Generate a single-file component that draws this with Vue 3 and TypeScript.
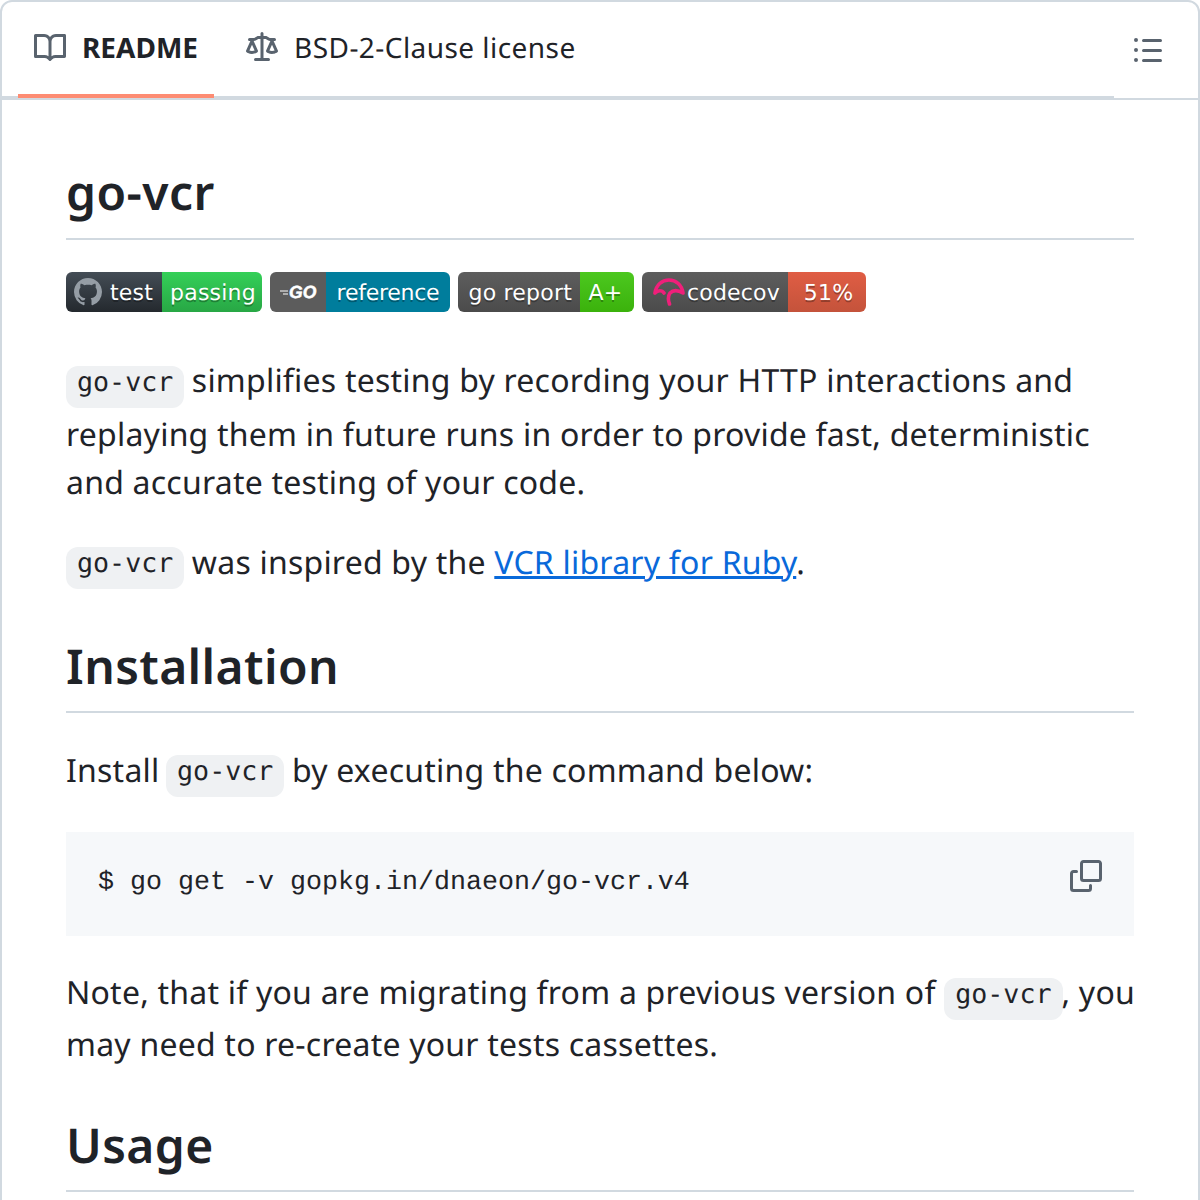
<script setup lang="ts">
type Badge = { left: string; right: string; rightClass: string; leftClass?: string; leftWidth: number; rightWidth: number; icon?: string }

const badges: Badge[] = [
  { left: 'test', right: 'passing', rightClass: 'badge__right--green', leftClass: 'badge__left--dark', leftWidth: 96, rightWidth: 100, icon: 'github' },
  { left: '', right: 'reference', rightClass: 'badge__right--teal', leftClass: 'badge__left--flat', leftWidth: 56, rightWidth: 124, icon: 'go' },
  { left: 'go report', right: 'A+', rightClass: 'badge__right--lime', leftWidth: 122, rightWidth: 54 },
  { left: 'codecov', right: '51%', rightClass: 'badge__right--red', leftWidth: 146, rightWidth: 78, icon: 'codecov' }
]
</script>

<template>
  <div class="readme">
    <header class="readme__header">
      <nav class="tabs">
        <a class="tab tab--active">
          <svg class="tab__icon" viewBox="0 0 16 16" width="32" height="32">
            <path d="M0 1.75A.75.75 0 0 1 .75 1h4.253c1.227 0 2.317.59 3 1.501A3.743 3.743 0 0 1 11.006 1h4.245a.75.75 0 0 1 .75.75v10.5a.75.75 0 0 1-.75.75h-4.507a2.25 2.25 0 0 0-1.591.659l-.622.621a.75.75 0 0 1-1.06 0l-.622-.621A2.25 2.25 0 0 0 5.258 13H.75a.75.75 0 0 1-.75-.75Zm7.251 10.324.004-5.073-.002-2.253A2.25 2.25 0 0 0 5.003 2.5H1.5v9h3.757a3.75 3.75 0 0 1 1.994.574ZM8.755 4.75l-.004 7.322a3.752 3.752 0 0 1 1.992-.572H14.5v-9h-3.495a2.25 2.25 0 0 0-2.25 2.25Z" />
          </svg>
          README
        </a>
        <a class="tab tab--plain">
          <svg class="tab__icon" viewBox="0 0 16 16" width="32" height="32">
            <path d="M8.75.75V2h.985c.304 0 .603.08.867.231l1.29.736c.038.022.08.033.124.033h2.234a.75.75 0 0 1 0 1.5h-.427l2.111 4.692a.75.75 0 0 1-.154.838l-.53-.53.529.531-.001.002-.002.002-.006.006-.006.005-.01.01-.045.04c-.21.176-.441.327-.686.45C14.556 10.78 13.88 11 13 11a4.498 4.498 0 0 1-2.023-.454 3.544 3.544 0 0 1-.686-.45l-.045-.04-.016-.015-.006-.006-.004-.004v-.001a.75.75 0 0 1-.154-.838L12.178 4.5h-.162c-.305 0-.604-.079-.868-.231l-1.29-.736a.245.245 0 0 0-.124-.033H8.75V13h2.5a.75.75 0 0 1 0 1.5h-6.5a.75.75 0 0 1 0-1.5h2.5V3.5h-.984a.245.245 0 0 0-.124.033l-1.289.737c-.265.15-.564.23-.869.23h-.162l2.112 4.692a.75.75 0 0 1-.154.838l-.53-.53.529.531-.001.002-.002.002-.006.006-.016.015-.045.04c-.21.176-.441.327-.686.45C4.556 10.78 3.88 11 3 11a4.498 4.498 0 0 1-2.023-.454 3.544 3.544 0 0 1-.686-.45l-.045-.04-.016-.015-.006-.006-.004-.004v-.001a.75.75 0 0 1-.154-.838L2.178 4.5H1.75a.75.75 0 0 1 0-1.5h2.234a.249.249 0 0 0 .125-.033l1.288-.737c.265-.15.564-.23.869-.23h.984V.75a.75.75 0 0 1 1.5 0Zm2.945 8.477c.285.135.718.273 1.305.273s1.02-.138 1.305-.273L13 6.327Zm-10 0c.285.135.718.273 1.305.273s1.02-.138 1.305-.273L3 6.327Z" />
          </svg>
          BSD-2-Clause license
        </a>
      </nav>
      <button class="outline-btn">
        <svg viewBox="0 0 16 16" width="32" height="32">
          <path d="M5.75 2.5h8.5a.75.75 0 0 1 0 1.5h-8.5a.75.75 0 0 1 0-1.5Zm0 5h8.5a.75.75 0 0 1 0 1.5h-8.5a.75.75 0 0 1 0-1.5Zm0 5h8.5a.75.75 0 0 1 0 1.5h-8.5a.75.75 0 0 1 0-1.5ZM2 14a1 1 0 1 1 0-2 1 1 0 0 1 0 2Zm1-6a1 1 0 1 1-2 0 1 1 0 0 1 2 0ZM2 4a1 1 0 1 1 0-2 1 1 0 0 1 0 2Z" />
        </svg>
      </button>
    </header>

    <article class="markdown">
      <h1>go-vcr</h1>
      <div class="badges">
        <span v-for="badge in badges" :key="badge.right" class="badge">
          <span class="badge__left" :class="badge.leftClass" :style="{ width: badge.leftWidth + 'px' }">
            <svg v-if="badge.icon === 'github'" class="badge__gh" viewBox="0 0 16 16" width="28" height="28">
              <path d="M8 0c4.42 0 8 3.58 8 8a8.013 8.013 0 0 1-5.45 7.59c-.4.08-.55-.17-.55-.38 0-.27.01-1.13.01-2.2 0-.75-.25-1.23-.54-1.48 1.78-.2 3.65-.88 3.65-3.95 0-.88-.31-1.59-.82-2.15.08-.2.36-1.02-.08-2.12 0 0-.67-.22-2.2.82-.64-.18-1.32-.27-2-.27-.68 0-1.36.09-2 .27-1.53-1.03-2.2-.82-2.2-.82-.44 1.1-.16 1.92-.08 2.12-.51.56-.82 1.28-.82 2.15 0 3.06 1.86 3.75 3.64 3.95-.23.2-.44.55-.51 1.07-.46.21-1.61.55-2.33-.66-.15-.24-.6-.83-1.23-.82-.67.01-.27.38.01.53.34.19.73.9.82 1.13.16.45.68 1.31 2.69.94 0 .67.01 1.3.01 1.49 0 .21-.15.45-.55.38A7.995 7.995 0 0 1 0 8c0-4.42 3.58-8 8-8Z" />
            </svg>
            <svg v-if="badge.icon === 'go'" class="badge__go" viewBox="0 0 38 18" width="38" height="18">
              <path d="M1 8h8M4 11h5" stroke="#fff" stroke-width="1" fill="none" />
              <text x="10" y="15" class="badge__go-text">GO</text>
            </svg>
            <svg v-if="badge.icon === 'codecov'" class="badge__cov" viewBox="0 0 32 30" width="32" height="30">
              <path d="M2 16C3 8 9 3 16 3s13 5 14 13c-5-3-10-3-13 0-2 3-2 7-.5 11M2 16c3-3 7-3 9 0" fill="none" stroke="#f01f7a" stroke-width="3.6" stroke-linecap="round" stroke-linejoin="round" />
            </svg>
            <span v-if="badge.left" class="badge__text">{{ badge.left }}</span>
          </span>
          <span class="badge__right" :class="badge.rightClass" :style="{ width: badge.rightWidth + 'px' }">{{ badge.right }}</span>
        </span>
      </div>
      <p class="gap-lead"><code>go-vcr</code> simplifies testing by recording your HTTP interactions and replaying them in future runs in order to provide fast, deterministic and accurate testing of your code.</p>
      <p class="gap-small"><code>go-vcr</code> was inspired by the <a href="#">VCR library for Ruby</a>.</p>
      <h2 class="heading-install">Installation</h2>
      <p class="gap-install">Install <code>go-vcr</code> by executing the command below:</p>
      <div class="snippet">
        <pre>$ go get -v gopkg.in/dnaeon/go-vcr.v4</pre>
        <svg class="snippet__copy" viewBox="0 0 16 16" width="32" height="32">
          <path d="M0 6.75C0 5.784.784 5 1.75 5h1.5a.75.75 0 0 1 0 1.5h-1.5a.25.25 0 0 0-.25.25v7.5c0 .138.112.25.25.25h7.5a.25.25 0 0 0 .25-.25v-1.5a.75.75 0 0 1 1.5 0v1.5A1.75 1.75 0 0 1 9.25 16h-7.5A1.75 1.75 0 0 1 0 14.25Z" />
          <path d="M5 1.75C5 .784 5.784 0 6.75 0h7.5C15.216 0 16 .784 16 1.75v7.5A1.75 1.75 0 0 1 14.25 11h-7.5A1.75 1.75 0 0 1 5 9.25Zm1.75-.25a.25.25 0 0 0-.25.25v7.5c0 .138.112.25.25.25h7.5a.25.25 0 0 0 .25-.25v-7.5a.25.25 0 0 0-.25-.25Z" />
        </svg>
      </div>
      <p class="gap-note">Note, that if you are migrating from a previous version of <code>go-vcr</code>, you may need to re-create your tests cassettes.</p>
      <h2 class="heading-usage">Usage</h2>
    </article>
  </div>
</template>

<style scoped>
.readme {
  box-sizing: border-box;
  width: 1200px;
  height: 1212px;
  border: 2px solid #d1d9e0;
  border-radius: 12px;
  color: #1f2328;
  font-family: "Noto Sans", sans-serif;
  text-rendering: geometricPrecision;
  background: #fff;
  overflow: hidden;
}

.readme__header {
  display: flex;
  justify-content: space-between;
  height: 96px;
  border-bottom: 2px solid #d1d9e0;
}

.tabs {
  display: flex;
  flex: 1;
  box-sizing: border-box;
  height: 96px;
  padding-left: 16px;
  border-bottom: 2px solid #d1d9e0;
}

.tab {
  display: flex;
  align-items: center;
  gap: 16px;
  box-sizing: border-box;
  height: 96px;
  padding: 0 16px;
  margin-right: 16px;
  border-bottom: 4px solid transparent;
  font-size: 28px;
  color: #1f2328;
}

.tab--active {
  font-weight: 700;
  border-bottom-color: #fd8c73;
}

.tab--plain {
  letter-spacing: 0.45px;
}

.tab__icon {
  fill: #59636e;
}

.outline-btn {
  display: flex;
  align-items: center;
  width: 84px;
  padding: 0 0 0 18px;
  border: none;
  background: none;
}

.outline-btn svg {
  fill: #59636e;
}

.markdown {
  padding: 62px 64px 0;
  font-size: 32px;
  line-height: 48px;
  letter-spacing: 0.22px;
}

h1,
h2 {
  margin: 0 0 34px;
  padding-bottom: 14px;
  border-bottom: 2px solid #d1d9e0;
  font-size: 48px;
  font-weight: 600;
  line-height: 1.25;
  letter-spacing: 0.4px;
}

h1 {
  margin-bottom: 32px;
  padding-top: 1px;
  padding-bottom: 15px;
}

.heading-install {
  margin-top: 49px;
}

.heading-usage {
  margin-top: 47px;
}

p {
  margin: 0 0 32px;
}

a {
  color: #0969da;
}

code {
  padding: 0.5px 11px 10.5px;
  margin-right: -1px;
  border-radius: 12px;
  background: #eff1f3;
  font-family: "DejaVu Sans Mono", monospace;
  font-size: 26.67px;
  letter-spacing: 0;
  vertical-align: 2px;
}

/* the mono font's descent pushes the line box down in the original */
code::after {
  content: "";
  display: inline-block;
  width: 0;
  height: 1px;
  vertical-align: var(--strut);
}

.gap-lead {
  --strut: -20.6px;
}

.gap-small {
  --strut: -15.8px;
}

.gap-install {
  --strut: -20.6px;
}

.gap-install code {
  margin-left: -2px;
}

.gap-note {
  --strut: -18.6px;
  margin-right: -4px;
}

.badges {
  display: flex;
  gap: 8px;
  margin-bottom: 45px;
}

.badge {
  display: flex;
  height: 40px;
  border-radius: 6px;
  overflow: hidden;
  color: #fff;
  font-family: "DejaVu Sans", sans-serif;
  font-size: 22px;
  line-height: 44px;
  letter-spacing: 0.2px;
  text-shadow: 0 2px 0 rgba(1, 1, 1, 0.3);
}

.badge__left {
  display: flex;
  align-items: flex-start;
  justify-content: flex-end;
  box-sizing: border-box;
  padding-right: 8px;
  background: linear-gradient(#5d5d5d, #4b4b4b);
}

.badge__left svg {
  align-self: center;
}

.badge__left--dark {
  padding-right: 9px;
  background: linear-gradient(#444d56, #24292e);
}

.badge__left--flat {
  justify-content: center;
  padding-right: 0;
  background: #5c5c5c;
}

.badge__right {
  box-sizing: border-box;
  text-align: center;
}

.badge__right--green {
  padding-left: 2px;
  background: linear-gradient(#34d058, #28a745);
}

.badge__right--teal {
  letter-spacing: -0.25px;
  background: #007d9c;
}

.badge__right--lime {
  padding-right: 3px;
  background: linear-gradient(#4cc81f, #3bb20c);
}

.badge__right--red {
  padding-left: 3px;
  background: linear-gradient(#e05d44, #c4533b);
}

.badge__gh {
  margin-right: 8px;
  fill: #959da5;
}

.badge__go-text {
  fill: #fff;
  stroke: #fff;
  stroke-width: 0.5px;
  font-family: "Liberation Sans", sans-serif;
  font-size: 17.5px;
  font-style: italic;
  font-weight: 700;
  text-shadow: none;
}

.badge__cov {
  margin-right: 2px;
}

.snippet {
  display: flex;
  justify-content: space-between;
  box-sizing: border-box;
  height: 104px;
  padding: 28px 32px;
  margin-bottom: 33px;
  background: #f6f8fa;
  letter-spacing: 0;
}

pre {
  margin: 3px 0 0;
  font-family: "Liberation Mono", monospace;
  font-size: 26.67px;
  line-height: 40px;
}

.snippet__copy {
  fill: #59636e;
}
</style>
